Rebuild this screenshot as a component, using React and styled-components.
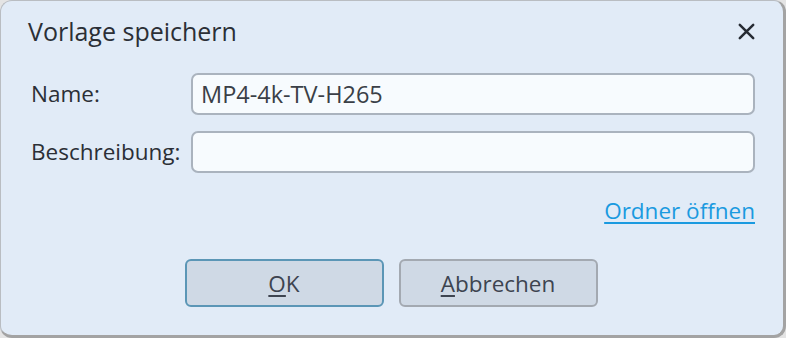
import React from "react";
import styled, { createGlobalStyle } from "styled-components";

const Global = createGlobalStyle`
  html, body { margin: 0; padding: 0; background: #e4e4e4; }
  body { font-family: "Open Sans", "Noto Sans", sans-serif; }
  * { box-sizing: border-box; }
`;

const Dialog = styled.div`
  width: 786px;
  height: 338px;
  background: #e1ebf7;
  border-style: solid;
  border-color: #b9bdc2 #a3a3a3 #a3a3a3 #b9bdc2;
  border-width: 1px 3px 3px 1px;
  border-radius: 12px;
  display: flex;
  flex-direction: column;
  color: #2b2f36;
`;

const Header = styled.div`
  display: flex;
  align-items: center;
  justify-content: space-between;
  padding: 14px 21px 0 27px;
  height: 46px;
`;

const Title = styled.h1`
  margin: 0;
  font-size: 25px;
  font-weight: 400;
  line-height: 32px;
`;

const CloseButton = styled.button`
  border: none;
  background: transparent;
  padding: 0;
  width: 32px;
  height: 32px;
  display: flex;
  align-items: center;
  justify-content: center;
  color: #262b33;
`;

const Form = styled.div`
  display: grid;
  grid-template-columns: 160px 1fr;
  row-gap: 16px;
  margin: 26px 28px 0 30px;
  align-items: center;
`;

const Label = styled.label`
  font-size: 22.5px;
  line-height: 28px;
`;

const Input = styled.input`
  height: 42px;
  width: 100%;
  border: 2px solid #aab3be;
  border-radius: 7px;
  background: #f7fbfe;
  font-family: inherit;
  font-size: 23.5px;
  color: #3a3f47;
  padding: 0 8px;
  outline: none;
`;

const LinkRow = styled.div`
  display: flex;
  justify-content: flex-end;
  margin: 24px 28px 0 0;
`;

const Link = styled.a`
  color: #1a9ae0;
  font-size: 22.5px;
  line-height: 28px;
  text-decoration: underline;
  text-decoration-thickness: 1.5px;
  text-underline-offset: 3px;
  cursor: pointer;
`;

const ButtonRow = styled.div`
  display: flex;
  justify-content: center;
  gap: 15px;
  margin-top: 34px;
  padding-right: 2px;
`;

const Button = styled.button`
  width: 199px;
  height: 48px;
  border-radius: 6px;
  border: 2px solid ${(p) => (p.$primary ? "#5b96b6" : "#a3a9b1")};
  background: #cfd9e5;
  font-family: inherit;
  font-size: 22.5px;
  color: #3d4450;
  & u { text-underline-offset: 3px; text-decoration-thickness: 1.5px; }
`;

export default function App() {
  return (
    <>
      <Global />
      <Dialog>
        <Header>
          <Title>Vorlage speichern</Title>
          <CloseButton aria-label="Schließen">
            <svg width="17" height="17" viewBox="0 0 17 17">
              <path d="M1.8 1.8 L15.2 15.2 M15.2 1.8 L1.8 15.2" stroke="currentColor" strokeWidth="2.5" strokeLinecap="round" />
            </svg>
          </CloseButton>
        </Header>
        <Form>
          <Label>Name:</Label>
          <Input defaultValue="MP4-4k-TV-H265" />
          <Label>Beschreibung:</Label>
          <Input defaultValue="" />
        </Form>
        <LinkRow>
          <Link>Ordner öffnen</Link>
        </LinkRow>
        <ButtonRow>
          <Button $primary><u>O</u>K</Button>
          <Button><u>A</u>bbrechen</Button>
        </ButtonRow>
      </Dialog>
    </>
  );
}
